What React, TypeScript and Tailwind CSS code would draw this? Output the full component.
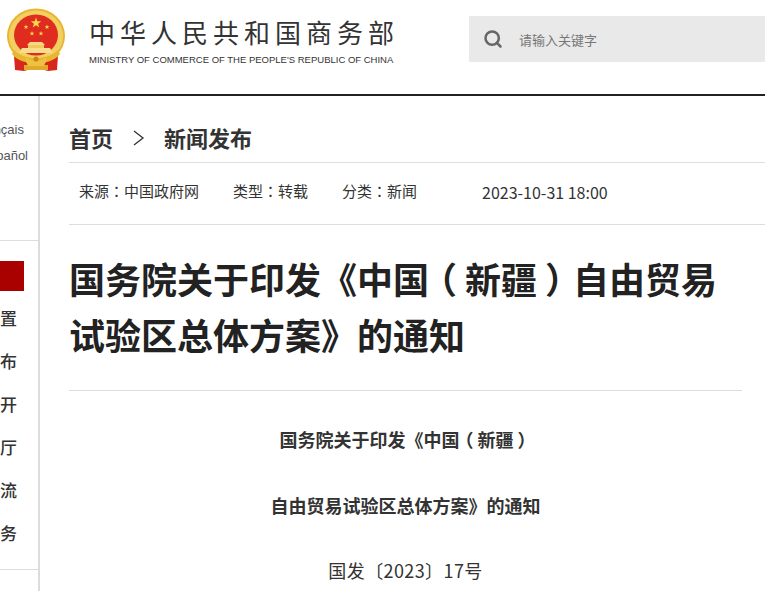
// 商务部 article page header + clipped left nav
import { Search } from "lucide-react"

function star(cx: number, cy: number, r: number) {
  const pts: string[] = []
  for (let i = 0; i < 10; i++) {
    const rad = i % 2 === 0 ? r : r * 0.4
    const a = (Math.PI / 5) * i - Math.PI / 2
    pts.push(`${(cx + rad * Math.cos(a)).toFixed(2)},${(cy + rad * Math.sin(a)).toFixed(2)}`)
  }
  return pts.join(" ")
}

function Emblem() {
  return (
    <svg width="72" height="72" viewBox="0 0 72 72" className="shrink-0">
      {/* ribbons */}
      <path d="M14 55 L25 60 L31 69 L24 71 L15 70 Z" fill="#d8261c" />
      <path d="M58 55 L47 60 L41 69 L48 71 L57 70 Z" fill="#d8261c" />
      <path d="M24 65 H48 V70 H24 Z" fill="#e2a92c" />
      {/* ring */}
      <ellipse cx="36" cy="36" rx="29" ry="27.5" fill="#e8b731" />
      <ellipse cx="36" cy="36" rx="27" ry="25.5" fill="#f3cf62" />
      <ellipse cx="36" cy="35" rx="22" ry="20.5" fill="#df2c1f" />
      {/* stars */}
      <polygon points={star(36, 23, 5.5)} fill="#f7d64a" />
      <polygon points={star(26, 27, 2.6)} fill="#f7d64a" />
      <polygon points={star(47, 27, 2.6)} fill="#f7d64a" />
      <polygon points={star(32, 33.5, 2.6)} fill="#f7d64a" />
      <polygon points={star(41, 33.5, 2.6)} fill="#f7d64a" />
      {/* gate */}
      <path d="M27 45 L30 42 H42 L45 45 Z" fill="#f4d98a" />
      <rect x="28" y="45" width="16" height="3" fill="#f0c85c" />
      <path d="M19 53 L22 48 H50 L53 53 Z" fill="#f7dd8c" />
      <path d="M14 50 C20 56 28 58 36 58 C44 58 52 56 58 50 L60 54 C54 62 44 63 36 63 C28 63 18 62 12 54 Z" fill="#e8b731" />
      <path d="M25 58 L36 62 L47 58 L44 66 H28 Z" fill="#efc341" />
      <circle cx="36" cy="59" r="2.5" fill="#c9861a" />
    </svg>
  )
}

// TC cut of the font centres the colon in its cell, like the screenshot
function Colon() {
  return <span className="font-['Noto_Sans_CJK_TC',sans-serif]">：</span>
}

// Noto pushes full-width parens to one side of the cell; the screenshot has them centred
function Open() {
  return <span className="-ml-[0.22em] mr-[0.22em] inline-block">（</span>
}
function Close() {
  return <span className="ml-[0.22em] -mr-[0.22em] inline-block">）</span>
}

function Header() {
  return (
    <header className="flex h-[94px] items-start bg-white">
      <Emblem />
      <div className="ml-[17px] mt-[15px] w-[308px]">
        <div className="whitespace-nowrap font-['Noto_Sans_CJK_SC',sans-serif] text-[26px] leading-[34px] tracking-[5px] text-[#333]">
          中华人民共和国商务部
        </div>
        <div className="mt-[4px] whitespace-nowrap font-['Liberation_Sans',sans-serif] text-[9.5px] leading-[14px] text-[#333]">
          MINISTRY OF COMMERCE OF THE PEOPLE'S REPUBLIC OF CHINA
        </div>
      </div>
      <div className="ml-[72px] mt-[16px] flex h-[46px] flex-1 items-center bg-[#e9e9e9] pl-[14px]">
        <Search size={20} strokeWidth={3} className="text-[#666]" />
        <span className="ml-[16px] pt-[2px] font-['Noto_Sans_CJK_SC',sans-serif] text-[13px] text-[#777]">请输入关键字</span>
      </div>
    </header>
  )
}

const navItems = ["机构设置", "新闻发布", "信息公开", "服务大厅", "互动交流", "商务服务"]

function Sidebar() {
  return (
    <aside className="h-full w-[40px] shrink-0 overflow-hidden border-r-2 border-[#dcdcdc] font-['Noto_Sans_CJK_SC',sans-serif]">
      <div className="h-[145px] border-b border-[#ddd] pt-[21px] font-['Liberation_Sans','Noto_Sans',sans-serif] text-[13px] leading-[26px] text-[#555]">
        <div className="flex justify-end whitespace-nowrap pr-[14px]">Français</div>
        <div className="flex justify-end whitespace-nowrap pr-[10px]">Español</div>
      </div>
      <div className="h-[329px] border-b border-[#ddd] pt-[20px]">
        <div className="h-[30px] w-[24px] bg-[#a90000]" />
        <div className="mt-[5px]">
          {navItems.map((item) => (
            <div key={item} className="flex h-[43px] items-center justify-end whitespace-nowrap pr-[21px] text-[17px] font-medium text-[#333]">
              {item}
            </div>
          ))}
        </div>
      </div>
    </aside>
  )
}

function MetaRow() {
  return (
    <div className="flex h-[62px] items-center border-b border-[#ddd] pb-[4px] pl-[10px] text-[15px] text-[#333]">
      <span className="w-[154px]">来源<Colon />中国政府网</span>
      <span className="w-[109px]">类型<Colon />转载</span>
      <span className="w-[140px]">分类<Colon />新闻</span>
      <span className="text-[16px] leading-[20px]">2023-10-31 18:00</span>
    </div>
  )
}

export default function App() {
  return (
    <div className="h-[591px] w-[765px] overflow-hidden bg-white">
      <Header />
      <div className="flex h-[497px] border-t-2 border-[#222]">
        <Sidebar />
        <main className="min-w-0 flex-1 pl-[29px] font-['Noto_Sans_CJK_SC',sans-serif]">
          <div className="flex h-[67px] items-center border-b border-[#ddd] pt-[17px] text-[22px] font-bold text-[#333]">
            <span>首页</span>
            <svg width="14" height="18" viewBox="0 0 14 18" className="ml-[19px] mr-[18px]">
              <path d="M2 2 L11 9 L2 16" fill="none" stroke="#333" strokeWidth="1.3" />
            </svg>
            <span>新闻发布</span>
          </div>
          <MetaRow />
          <div className="mr-[23px]">
            <h1 className="border-b border-[#ddd] pb-[28px] pt-[25px] text-[36px] font-bold leading-[56px] text-[#222]">
              国务院关于印发《中国<Open />新疆<Close />自由贸易试验区总体方案》的通知
            </h1>
            <div className="pt-[32px] text-center text-[18px] leading-[32px] text-[#333]">
              <p className="font-bold">国务院关于印发《中国<Open />新疆<Close /></p>
              <p className="mt-[34px] font-bold">自由贸易试验区总体方案》的通知</p>
              <p className="mt-[33px] tracking-[0.4px]">国发〔2023〕17号</p>
            </div>
          </div>
        </main>
      </div>
    </div>
  )
}
